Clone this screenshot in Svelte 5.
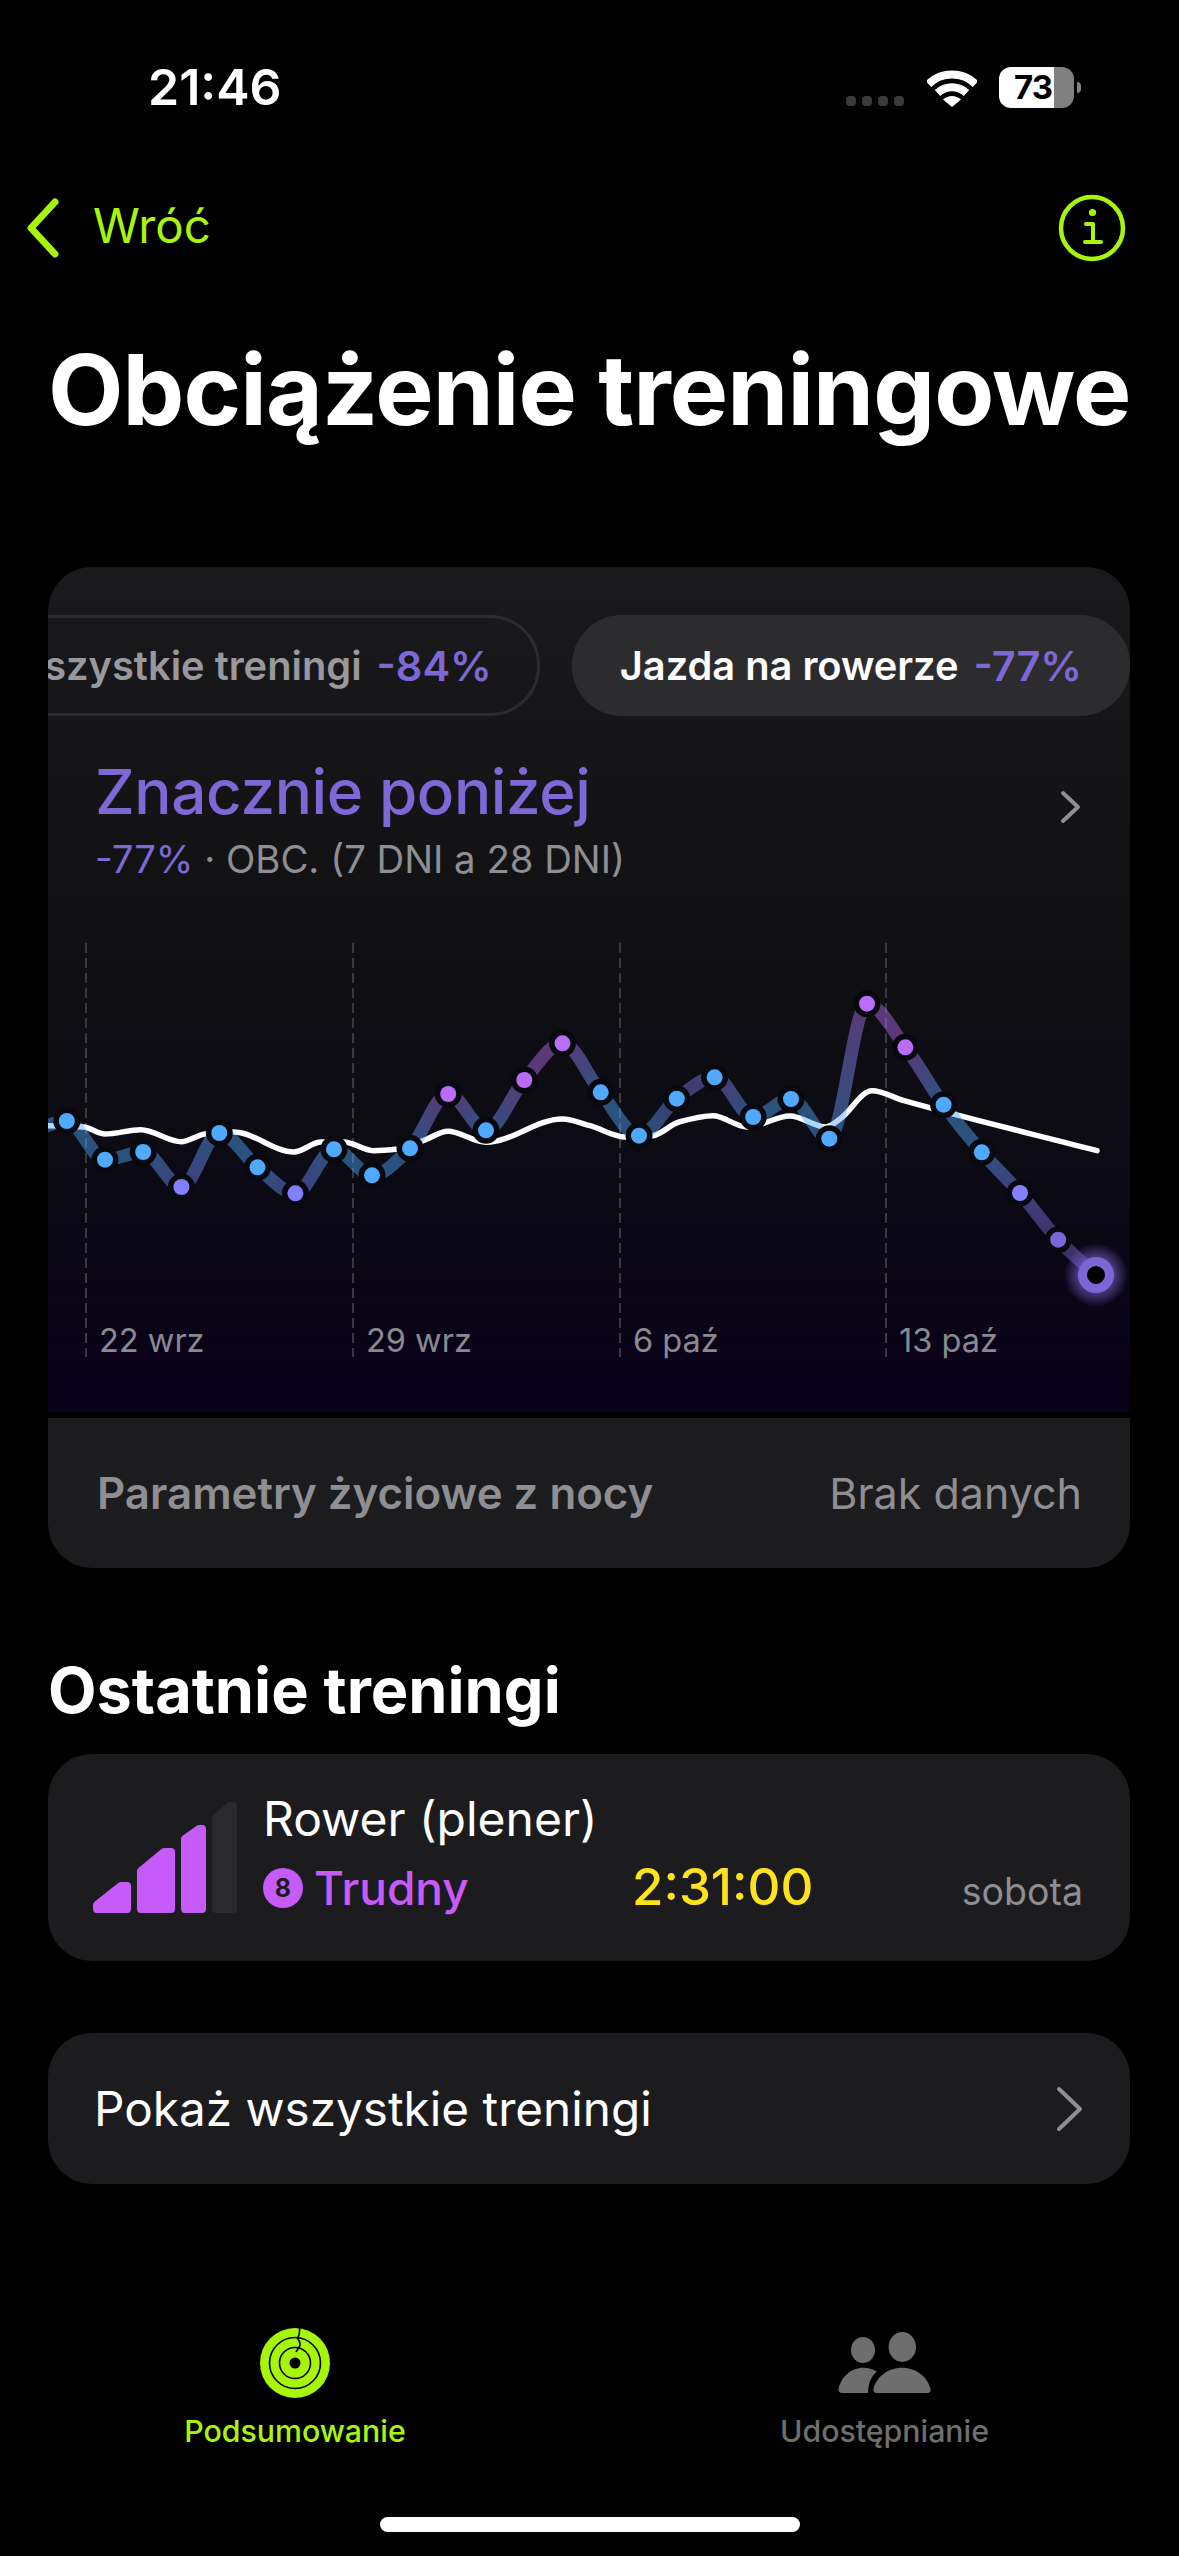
<script>
  const B = "#4fa9ff";
  const I = "#8280ff";
  const P = "#b96cf5";
  const L = "#7b66d6";

  // x, y, dot colour, optional line colour (chart coords = page coords)
  const points = [
    [28.6, 1134, B], [66.8, 1122, B], [105, 1160.7, B], [143.2, 1153, B], [181.4, 1188, I],
    [219.3, 1134, B], [257.5, 1168.3, B], [295.4, 1194.3, I], [334, 1150.3, B], [372, 1176.3, B],
    [410, 1149.3, B], [448.2, 1095, P], [486, 1131.3, B], [524.3, 1081, P], [562.5, 1044.3, P],
    [600.7, 1093.3, B], [639, 1136.7, B], [676.8, 1099.7, B, "#6f78ea"], [714.6, 1078.3, B, "#8f74ee"],
    [753.2, 1118, B], [791, 1100, B], [829.3, 1139.7, B], [867, 1004.7, P], [905.4, 1048.3, P],
    [943.6, 1105.7, B], [981.8, 1153.3, B], [1020, 1194, I], [1058.2, 1240.7, L], [1096, 1276, L]
  ];

  const average = [
    [20, 1127], [48, 1126.7], [83.6, 1128], [105, 1135], [140.7, 1130.7], [181.4, 1142.7], [205, 1135],
    [233.6, 1133], [294, 1153], [321, 1143], [344, 1143], [373, 1151.7], [398, 1150], [423, 1141.7],
    [448, 1132.3], [486, 1143.3], [562, 1120], [590, 1126.7], [625.7, 1138], [652.5, 1136.7], [679, 1123],
    [713, 1116.7], [747, 1128], [790, 1117], [826, 1128], [840, 1120], [872, 1091.7], [904, 1101.7], [1097, 1151.7]
  ];

  // monotone cubic, one bezier per interval
  function monotone(pts) {
    const n = pts.length;
    const d = [];
    for (let i = 0; i < n - 1; i++) d.push((pts[i + 1][1] - pts[i][1]) / (pts[i + 1][0] - pts[i][0]));
    const m = [d[0]];
    for (let i = 1; i < n - 1; i++) {
      m.push(d[i - 1] * d[i] <= 0 ? 0 : (2 * d[i - 1] * d[i]) / (d[i - 1] + d[i]));
    }
    m.push(d[n - 2]);
    const out = [];
    for (let i = 0; i < n - 1; i++) {
      const [x0, y0] = pts[i];
      const [x1, y1] = pts[i + 1];
      const h = (x1 - x0) / 3;
      out.push(`C${x0 + h} ${y0 + m[i] * h} ${x1 - h} ${y1 - m[i + 1] * h} ${x1} ${y1}`);
    }
    return out;
  }

  const curves = monotone(points);
  const segments = curves.map((c, i) => ({
    d: `M${points[i][0]} ${points[i][1]}${c}`,
    x1: points[i][0],
    y1: points[i][1],
    x2: points[i + 1][0],
    y2: points[i + 1][1],
    from: points[i][3] || points[i][2],
    to: points[i + 1][3] || points[i + 1][2]
  }));
  const averagePath = `M${average[0][0]} ${average[0][1]}` + monotone(average).join("");

  const ticks = [
    { x: 86, label: "22 wrz" },
    { x: 353, label: "29 wrz" },
    { x: 620, label: "6 paź" },
    { x: 886, label: "13 paź" }
  ];
</script>

<div class="screen">
  <div class="status">
    <span class="time">21:46</span>
    <div class="status-right">
      <div class="signal"><i></i><i></i><i></i><i></i></div>
      <svg class="wifi" width="50" height="38" viewBox="927 69 50 38">
        <path d="M928.5 84 A34 34 0 0 1 975.5 84" fill="none" stroke="#fff" stroke-width="8" />
        <path d="M937.5 93 A21 21 0 0 1 966.5 93" fill="none" stroke="#fff" stroke-width="8" />
        <path d="M943 99.5 A13 13 0 0 1 961 99.5 L952 107 Z" fill="#fff" />
      </svg>
      <div class="battery"><span>73</span></div>
      <div class="nub"></div>
    </div>
  </div>

  <div class="nav">
    <div class="back">
      <svg width="34" height="60" viewBox="0 0 34 60">
        <path d="M29 4 L5 30 L29 56" fill="none" stroke="#a8f50c" stroke-width="7" stroke-linecap="round" stroke-linejoin="round" />
      </svg>
      <span class="back-label">Wróć</span>
    </div>
    <svg width="68" height="68" viewBox="1058 194 68 68">
      <circle cx="1092" cy="228" r="31" fill="none" stroke="#a8f50c" stroke-width="4.5" />
      <circle cx="1092.5" cy="212.5" r="3.6" fill="#a8f50c" />
      <path d="M1086 224 H1093 V242 M1085 242 H1101" fill="none" stroke="#a8f50c" stroke-width="4" stroke-linecap="round" stroke-linejoin="round" />
    </svg>
  </div>

  <h1>Obciążenie treningowe</h1>

  <section class="load-card">
    <div class="load-top">
      <div class="pills">
        <div class="pill">Wszystkie treningi <b>-84%</b></div>
        <div class="pill active">Jazda na rowerze <b>-77%</b></div>
      </div>

      <div class="summary">
        <div>
          <div class="summary-title">Znacznie poniżej</div>
          <div class="summary-sub"><em>-77%</em> · OBC. (7 DNI a 28 DNI)</div>
        </div>
        <svg class="summary-chevron" width="22" height="34" viewBox="0 0 22 34">
          <path d="M3 3 L18 17 L3 31" fill="none" stroke="#8e8e93" stroke-width="4" stroke-linecap="round" stroke-linejoin="round" />
        </svg>
      </div>

      <svg class="chart" width="1082" height="530" viewBox="48 882 1082 530">
        <defs>
          {#each segments as s, i}
            <linearGradient id="seg{i}" gradientUnits="userSpaceOnUse" x1={s.x1} y1={s.y1} x2={s.x2} y2={s.y2 + 0.01}>
              <stop offset="0" stop-color={s.from} />
              <stop offset="1" stop-color={s.to} />
            </linearGradient>
          {/each}
          <radialGradient id="glow">
            <stop offset="0.55" stop-color="#7b66d6" stop-opacity="0.55" />
            <stop offset="1" stop-color="#7b66d6" stop-opacity="0" />
          </radialGradient>
        </defs>

        {#each ticks as t}
          <line x1={t.x} x2={t.x} y1="944" y2="1358" stroke="#4a4a4e" stroke-width="1.5" stroke-dasharray="10 5" />
          <text x={t.x + 13} y="1353" class="tick">{t.label}</text>
        {/each}

        <path d={averagePath} fill="none" stroke="#fff" stroke-width="5.5" stroke-linecap="round" />

        {#each segments as s, i}
          <path d={s.d} fill="none" stroke="url(#seg{i})" stroke-opacity="0.45" stroke-width="13" />
        {/each}

        {#each points.slice(0, -1) as p}
          <circle cx={p[0]} cy={p[1]} r="13.5" fill="#08080f" />
          <circle cx={p[0]} cy={p[1]} r="8" fill={p[2]} />
        {/each}

        <circle cx="1096" cy="1276" r="32" fill="url(#glow)" />
        <circle cx="1096" cy="1276" r="13.5" fill="#000" stroke="#7b66d6" stroke-width="9" />
      </svg>
    </div>

    <div class="vitals">
      <span class="vitals-label">Parametry życiowe z nocy</span>
      <span>Brak danych</span>
    </div>
  </section>

  <h2>Ostatnie treningi</h2>

  <section class="workout">
    <svg class="bars" width="144" height="111" viewBox="0 0 144 111" stroke-width="8" stroke-linejoin="round">
      <polygon points="4,107 4,103 28,84 34,84 34,107" fill="#c65bfa" stroke="#c65bfa" />
      <polygon points="48,107 48,69 71,50 78,50 78,107" fill="#c65bfa" stroke="#c65bfa" />
      <polygon points="92,107 92,37 106,27 109,27 109,107" fill="#c65bfa" stroke="#c65bfa" />
      <polygon points="123,107 123,16 137,4 140,4 140,107" fill="#2a2a2c" stroke="#2a2a2c" />
    </svg>
    <div class="workout-body">
      <div class="workout-name">Rower (plener)</div>
      <div class="workout-stats">
        <div class="effort"><span class="badge">8</span>Trudny</div>
        <span class="duration">2:31:00</span>
        <span class="day">sobota</span>
      </div>
    </div>
  </section>

  <section class="show-all">
    <span>Pokaż wszystkie treningi</span>
    <svg width="28" height="46" viewBox="0 0 28 46">
      <path d="M3 3 L24 23 L3 43" fill="none" stroke="#8e8e93" stroke-width="4" stroke-linecap="round" stroke-linejoin="round" />
    </svg>
  </section>

  <nav class="tabs">
    <div class="tab current">
      <svg width="70" height="70" viewBox="0 0 70 70">
        <circle cx="35" cy="35" r="35" fill="#a8f50c" />
        <circle cx="35" cy="35" r="25.5" fill="none" stroke="#000" stroke-width="1.6" />
        <circle cx="35" cy="35" r="15.5" fill="none" stroke="#000" stroke-width="1.6" />
        <circle cx="35" cy="35" r="5.5" fill="#000" />
        <path d="M39.5 0 C40 5 39 8 37.5 10.5 C39 12 40.5 14 40 17 C39.5 20 37 22 36 24" fill="none" stroke="#000" stroke-width="1.6" />
      </svg>
      <span>Podsumowanie</span>
    </div>
    <div class="tab">
      <svg width="93" height="70" viewBox="0 -4 93 70">
        <ellipse cx="64.3" cy="15" rx="13.7" ry="15" fill="#6e6e6e" />
        <ellipse cx="25" cy="18" rx="12" ry="13" fill="#6e6e6e" />
        <path d="M39 61 C36 61 35 59 35.5 57 C38 45 50 35.7 64 35.7 C78 35.7 90 45 92.5 57 C93 59 92 61 89 61 Z" fill="#6e6e6e" />
        <path d="M4 61 C1.5 61 0 59 .5 57 C3 45 13 35.7 25 35.7 C30 35.7 35 37 39 39.5 C33 44 30 52 30 61 Z" fill="#6e6e6e" />
      </svg>
      <span>Udostępnianie</span>
    </div>
  </nav>

  <div class="home-bar"></div>
</div>

<style>
  :global(body) {
    margin: 0;
    background: #000;
  }

  .screen {
    width: 1179px;
    height: 2556px;
    overflow: hidden;
    background: #000;
    color: #fff;
    font-family: Inter, "Noto Sans", sans-serif;
  }

  .status {
    box-sizing: border-box;
    height: 170px;
    padding: 60px 98px 0 148px;
    display: flex;
    justify-content: space-between;
    align-items: flex-start;
  }

  .time {
    font-size: 50px;
    line-height: 55px;
    font-weight: 600;
  }

  .status-right {
    display: flex;
    align-items: flex-start;
    margin-top: 7px;
  }

  .signal {
    display: flex;
    gap: 6px;
    margin: 29px 23px 0 0;
  }

  .signal i {
    width: 10px;
    height: 10px;
    border-radius: 4px;
    background: #3a3a3c;
  }

  .wifi {
    margin: 2px 22px 0 0;
  }

  .battery {
    width: 75px;
    height: 41px;
    border-radius: 12px;
    background: linear-gradient(90deg, #fff 0 55px, #808080 55px);
    color: #000;
    font-size: 33px;
    line-height: 41px;
    font-weight: 700;
    box-sizing: border-box;
    padding-left: 15px;
    letter-spacing: -1px;
  }

  .nub {
    width: 4px;
    height: 11px;
    margin: 15px 0 0 3px;
    border-radius: 0 4px 4px 0;
    background: #808080;
  }

  .nav {
    box-sizing: border-box;
    height: 116px;
    padding: 0 53px 0 26px;
    display: flex;
    justify-content: space-between;
    align-items: center;
    color: #a8f50c;
  }

  .back {
    display: flex;
    align-items: center;
    gap: 33px;
    font-size: 47.5px;
  }

  .back-label {
    margin-top: -5px;
  }

  h1 {
    margin: 49px 0 122px 48px;
    font-size: 98px;
    line-height: 110px;
    font-weight: 700;
    letter-spacing: -0.9px;
    white-space: nowrap;
  }

  .load-card {
    margin: 0 49px 0 48px;
    height: 1001px;
    border-radius: 44px;
    overflow: hidden;
  }

  .load-top {
    height: 845px;
    padding-top: 48px;
    box-sizing: border-box;
    background: linear-gradient(180deg, #1a1a1c 0%, #111113 42%, #0b0914 75%, #09001a 100%);
  }

  .pills {
    display: flex;
    justify-content: flex-end;
    gap: 32px;
    height: 101px;
  }

  .pill {
    flex: none;
    box-sizing: border-box;
    height: 101px;
    padding: 0 45px;
    border-radius: 50px;
    border: 3px solid #2c2c2e;
    display: flex;
    align-items: center;
    gap: 15px;
    color: #98989d;
    font-size: 39.8px;
    font-weight: 600;
    white-space: nowrap;
  }

  .pill.active {
    background: #2c2c2e;
    color: #fff;
  }

  .pill b {
    font-size: 41.5px;
    font-weight: 600;
    color: #7d68d6;
  }

  .summary {
    display: flex;
    justify-content: space-between;
    padding: 41px 48px 0 47px;
  }

  .summary-title {
    font-size: 62px;
    line-height: 70px;
    font-weight: 500;
    letter-spacing: -0.4px;
    color: #7d68d6;
  }

  .summary-sub {
    margin-top: 10px;
    font-size: 38.3px;
    line-height: 44px;
    color: #8e8e93;
  }

  .summary-sub em {
    font-style: normal;
    color: #7d68d6;
  }

  .summary-chevron {
    margin-top: 33px;
  }

  .chart {
    display: block;
  }

  .tick {
    font-size: 32.5px;
    fill: #8a8890;
  }

  .vitals {
    margin-top: 6px;
    height: 150px;
    box-sizing: border-box;
    padding: 0 48px 0 49px;
    background: #1c1c1e;
    display: flex;
    justify-content: space-between;
    align-items: center;
    color: #8e8e93;
    font-size: 43px;
  }

  .vitals-label {
    font-size: 43.8px;
    font-weight: 600;
  }

  h2 {
    margin: 84px 0 26px 48px;
    font-size: 63px;
    line-height: 76px;
    font-weight: 700;
  }

  .workout {
    margin: 0 49px 0 48px;
    height: 207px;
    box-sizing: border-box;
    padding: 0 47px 0 45px;
    border-radius: 44px;
    background: #1c1c1e;
    display: flex;
    gap: 26px;
  }

  .bars {
    flex: none;
    margin-top: 48px;
  }

  .workout-body {
    flex: 1;
    padding-top: 35px;
  }

  .workout-name {
    font-size: 48px;
    line-height: 60px;
  }

  .workout-stats {
    margin-top: 8px;
    display: grid;
    grid-template-columns: 369px 1fr auto;
    align-items: baseline;
    line-height: 60px;
  }

  .effort {
    align-self: center;
    margin-top: -4px;
    display: flex;
    align-items: center;
    gap: 11px;
    color: #c65bfa;
    font-size: 46px;
    font-weight: 500;
  }

  .badge {
    width: 40px;
    height: 40px;
    border-radius: 50%;
    background: #c65bfa;
    color: #1c1c1e;
    font-size: 25px;
    line-height: 40px;
    font-weight: 700;
    text-align: center;
  }

  .duration {
    font-size: 51px;
    font-weight: 500;
    color: #fde21c;
  }

  .day {
    font-size: 37.5px;
    color: #8e8e93;
  }

  .show-all {
    margin: 72px 49px 0 48px;
    height: 151px;
    box-sizing: border-box;
    padding: 0 46px 0 46px;
    border-radius: 44px;
    background: #1c1c1e;
    display: flex;
    justify-content: space-between;
    align-items: center;
    font-size: 47.7px;
  }

  .tabs {
    margin-top: 144px;
    display: grid;
    grid-template-columns: 590px 589px;
  }

  .tab {
    display: flex;
    flex-direction: column;
    align-items: center;
    gap: 15px;
    color: #6e6e6e;
    font-size: 30.3px;
    line-height: 36px;
    font-weight: 500;
  }

  .tab.current {
    color: #a8f50c;
  }

  .home-bar {
    width: 420px;
    height: 15px;
    margin: 68px auto 0;
    border-radius: 8px;
    background: #fff;
  }
</style>
